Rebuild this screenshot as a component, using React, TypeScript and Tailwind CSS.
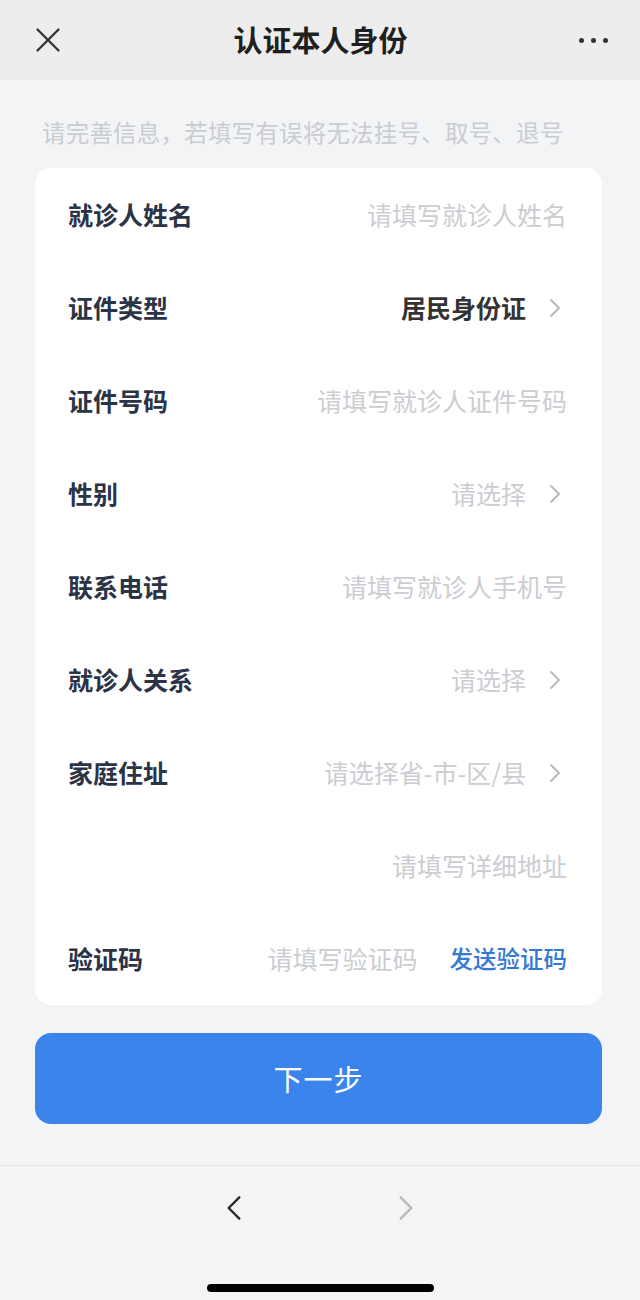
import React from "react";

type Row = {
  label?: string;
  value: string;
  filled?: boolean;
  arrow?: boolean;
  action?: string;
};

const rows: Row[] = [
  { label: "就诊人姓名", value: "请填写就诊人姓名" },
  { label: "证件类型", value: "居民身份证", filled: true, arrow: true },
  { label: "证件号码", value: "请填写就诊人证件号码" },
  { label: "性别", value: "请选择", arrow: true },
  { label: "联系电话", value: "请填写就诊人手机号" },
  { label: "就诊人关系", value: "请选择", arrow: true },
  { label: "家庭住址", value: "请选择省-市-区/县", arrow: true },
  { value: "请填写详细地址" },
  { label: "验证码", value: "请填写验证码", action: "发送验证码" },
];

function Chevron({ className }: { className?: string }) {
  return (
    <svg viewBox="0 0 12 20" className={className} fill="none">
      <path d="M2 2l8 8-8 8" stroke="currentColor" strokeWidth="1.8" strokeLinecap="round" strokeLinejoin="round" />
    </svg>
  );
}

export default function App() {
  return (
    <div
      className="flex h-[1300px] w-[640px] flex-col bg-[#f3f4f6]"
      style={{ fontFamily: '"Noto Sans CJK SC", "Noto Sans", sans-serif' }}
    >
      {/* header */}
      <div className="flex h-[80px] items-center justify-between bg-[#ededed] px-[34px]">
        <svg viewBox="0 0 24 24" className="h-[28px] w-[28px] text-[#333]" fill="none">
          <path d="M3 3l18 18M21 3L3 21" stroke="currentColor" strokeWidth="2" strokeLinecap="round" />
        </svg>
        <div className="text-[29px] font-bold text-[#1f1f1f]">认证本人身份</div>
        <div className="-mr-[2px] flex w-[29px] items-center justify-between">
          <span className="h-[5px] w-[5px] rounded-full bg-[#333]" />
          <span className="h-[5px] w-[5px] rounded-full bg-[#333]" />
          <span className="h-[5px] w-[5px] rounded-full bg-[#333]" />
        </div>
      </div>

      <div className="pl-[42px] pt-[37px] pb-[21px] text-[23.5px] leading-[30px] tracking-[0.2px] text-[#c9ccd2]">
        请完善信息，若填写有误将无法挂号、取号、退号
      </div>

      {/* form card */}
      <div className="ml-[35px] w-[567px] rounded-[16px] bg-white pl-[33px] pr-[35px]">
        {rows.map((row, i) => (
          <div key={i} className="flex h-[93px] items-center justify-between">
            <div className="text-[25px] font-bold text-[#2b3346]">{row.label}</div>
            <div className="flex items-center">
              <span
                className={
                  row.filled
                    ? "text-[25px] font-semibold text-[#333]"
                    : "text-[25px] text-[#cbcdd2]"
                }
              >
                {row.value}
              </span>
              {row.action && (
                <span className="ml-[32px] text-[23.5px] font-medium text-[#3478d6]">{row.action}</span>
              )}
              {row.arrow && <Chevron className="ml-[23px] mr-[6px] h-[20px] w-[12px] text-[#b5b7bb]" />}
            </div>
          </div>
        ))}
      </div>

      <div className="ml-[35px] mt-[28px] flex h-[91px] w-[567px] items-center justify-center rounded-[16px] bg-[#3a84ec]">
        <span className="text-[29px] tracking-[1px] text-white">下一步</span>
      </div>

      {/* bottom bar */}
      <div className="mt-auto flex h-[135px] flex-col border-t border-[#e6e6e6] bg-[#f5f5f5]">
        <div className="flex h-[84px] items-center justify-center gap-[156px]">
          <Chevron className="h-[30px] w-[16px] rotate-180 text-[#2a2a2a]" />
          <Chevron className="h-[30px] w-[16px] text-[#b9b9b9]" />
        </div>
        <div className="mt-[34px] flex justify-center">
          <div className="h-[8px] w-[227px] rounded-full bg-black" />
        </div>
      </div>
    </div>
  );
}
